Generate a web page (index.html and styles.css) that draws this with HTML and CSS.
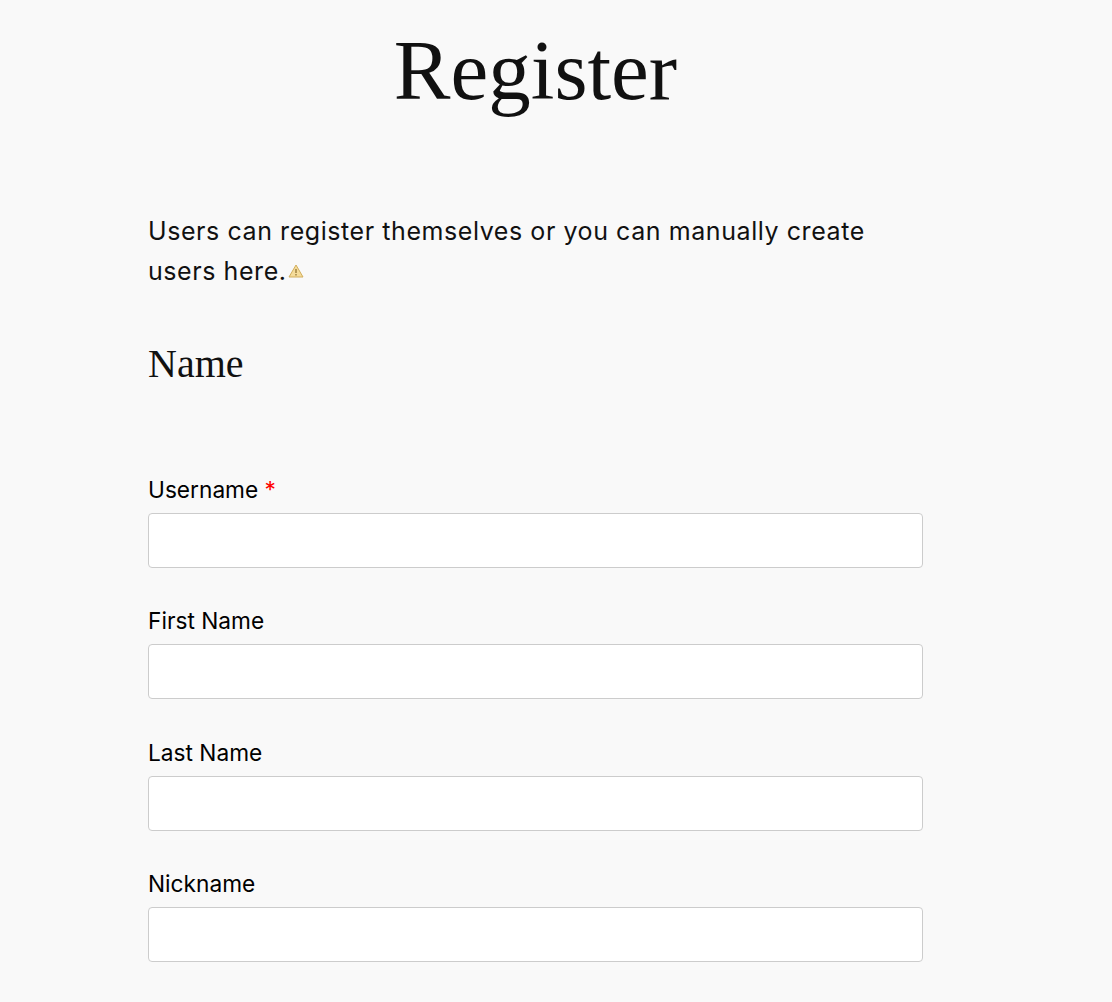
FILE: index.html
```html
<!DOCTYPE html>
<html lang="en">
<head>
    <meta charset="UTF-8">
    <title>Register</title>
    <link rel="stylesheet" href="styles.css">
</head>
<body>
    <main class="page">
        <h1 class="page-title">Register</h1>
        <p class="intro">Users can register themselves or you can manually create users here.<svg class="warn" viewBox="0 0 16 14" width="16" height="14"><path d="M8 1 L15 13 H1 Z" fill="#f5dc9a" stroke="#d2ae5c" stroke-width="1" stroke-linejoin="round"/><path d="M8 5v4M8 10v1.6" stroke="#8a6d2c" stroke-width="1.2"/></svg></p>
        <h2 class="section-title">Name</h2>
        <form class="form">
            <div class="field">
                <label class="field-label">Username <span class="required">*</span></label>
                <input class="field-input" type="text">
            </div>
            <div class="field">
                <label class="field-label">First Name</label>
                <input class="field-input" type="text">
            </div>
            <div class="field">
                <label class="field-label">Last Name</label>
                <input class="field-input" type="text">
            </div>
            <div class="field">
                <label class="field-label">Nickname</label>
                <input class="field-input" type="text">
            </div>
        </form>
    </main>
</body>
</html>
```

FILE: styles.css
```css
html, body {
    margin: 0;
    height: 1002px;
    overflow: hidden;
}
body {
    background: #f9f9f9;
    color: #111;
    font-family: Inter, sans-serif;
}
.page {
    width: 775px;
    margin-left: 148px;
}
.page-title {
    margin: 0;
    padding-top: 20px;
    font-family: "Liberation Serif", serif;
    font-size: 85px;
    line-height: 100px;
    font-weight: 400;
    text-align: center;
}
.intro {
    margin: 0;
    padding-top: 91px;
    width: 740px;
    font-size: 25px;
    line-height: 40px;
    letter-spacing: 0.57px;
}
.warn {
    margin-left: 1px;
    vertical-align: 2px;
}
.section-title {
    margin: 0;
    padding-top: 48px;
    font-family: "Liberation Serif", serif;
    font-size: 40px;
    line-height: 50px;
    font-weight: 400;
}
.form {
    padding-top: 86px;
    display: flex;
    flex-direction: column;
    gap: 38.33px;
}
.field-label {
    display: block;
    font-size: 22.7px;
    line-height: 30px;
    margin-bottom: 8px;
    color: #000;
}
.required {
    color: #f00;
}
.field-input {
    display: block;
    box-sizing: border-box;
    width: 100%;
    height: 55px;
    background: #fff;
    border: 1px solid #ccc;
    border-radius: 4px;
}
```
